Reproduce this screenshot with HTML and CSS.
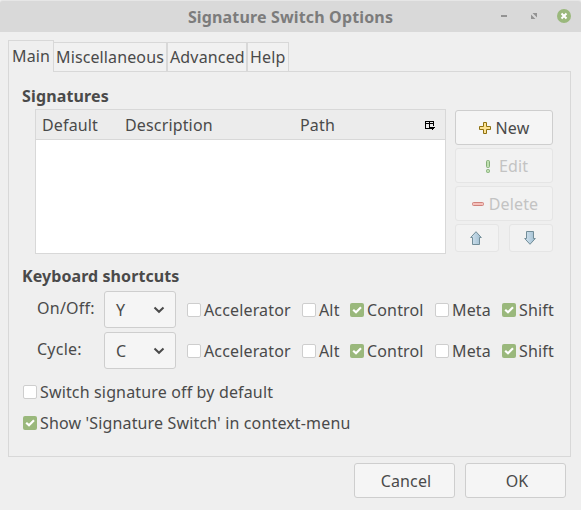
FILE: index.html
```html
<!DOCTYPE html>
<html lang="en">
<head>
<meta charset="utf-8">
<title>Signature Switch Options</title>
<link rel="stylesheet" href="styles.css">
</head>
<body>
<svg class="defs" width="0" height="0">
  <symbol id="tick" viewBox="0 0 14 14"><path d="M3.200 6.700 6 9.300 11 4.300" fill="none" stroke="#fff" stroke-width="2.200"/></symbol>
  <symbol id="chevron" viewBox="0 0 12 8"><path d="M1.500 1.500 6 5.800 10.500 1.500" fill="none" stroke="#4a4a4a" stroke-width="2"/></symbol>
</svg>
<header class="titlebar">
  <h1>Signature Switch Options</h1>
  <div class="controls">
    <svg width="6" height="16" viewBox="0 0 6 16"><path d="M0 7h6v2H0z" fill="#939393"/></svg>
    <svg width="6" height="16" viewBox="0 0 6 16"><path d="M1.500 5H6v4.500zM0 6.500v4.500h4.500z" fill="#939393"/></svg>
    <svg width="14" height="16" viewBox="0 0 14 16"><circle cx="7" cy="8" r="7" fill="#9ab87c"/><path d="M4.500 5.500l5 5m0-5l-5 5" stroke="#fff" stroke-width="2"/></svg>
  </div>
</header>
<nav class="tabs">
  <span class="tab active">Main</span><span class="tab misc">Miscellaneous</span><span class="tab adv">Advanced</span><span class="tab help">Help</span>
</nav>
<main class="panel">
  <h2>Signatures</h2>
  <div class="signatures">
    <div class="tree">
      <div class="tree-head">
        <span>Default</span><span>Description</span><span>Path</span>
        <svg width="11" height="10" viewBox="0 0 11 10" shape-rendering="crispEdges"><path d="M0 0h9v5H8V3H5v4h1v1H0zM1 3v4h3V3zM1 1v1h3V1zM5 1v1h3V1z" fill="#000" fill-rule="evenodd"/><path d="M5 6h5v1H9v1H8v1H7V8H6V7H5z" fill="#000"/></svg>
      </div>
    </div>
    <div class="actions">
      <button class="btn"><svg width="12" height="12" viewBox="0 0 12 12"><path d="M4.500.5h3v4h4v3h-4v4h-3v-4h-4v-3h4z" fill="#fce294" stroke="#8f7212" stroke-linejoin="round"/></svg>New</button>
      <button class="btn off edit"><svg width="4" height="13" viewBox="0 0 4 13"><rect x=".5" y=".5" width="3" height="7" rx="1" fill="#bfe0b0" stroke="#85ae78"/><rect x=".5" y="9.500" width="3" height="3" rx="1" fill="#bfe0b0" stroke="#85ae78"/></svg>Edit</button>
      <button class="btn off delete"><svg width="12" height="4" viewBox="0 0 12 4"><rect x=".5" y=".5" width="11" height="3" rx="1" fill="#f5c0bb" stroke="#cf827c"/></svg>Delete</button>
      <div class="movers">
        <button class="btn off"><svg width="12" height="14" viewBox="0 0 12 14"><defs><linearGradient id="g"><stop stop-color="#d3e4f0"/><stop offset="1" stop-color="#9fbdd0"/></linearGradient></defs><path d="M6 .7 11.300 6.500H9.500v7h-7v-7H.7z" fill="url(#g)" stroke="#728d98"/></svg></button>
        <button class="btn off"><svg width="12" height="14" viewBox="0 0 12 14"><path d="M6 13.300.7 7.500h1.800v-7h7v7h1.800z" fill="url(#g)" stroke="#728d98"/></svg></button>
      </div>
    </div>
  </div>
  <h2 class="keys-title">Keyboard shortcuts</h2>
  <div class="shortcut">
    <span class="name">On/Off:</span>
    <div class="select">Y<svg width="12" height="8"><use href="#chevron"/></svg></div>
    <label class="check accel"><i class="box"></i>Accelerator</label>
    <label class="check alt"><i class="box"></i>Alt</label>
    <label class="check control"><i class="box on"><svg width="14" height="14"><use href="#tick"/></svg></i>Control</label>
    <label class="check meta"><i class="box"></i>Meta</label>
    <label class="check"><i class="box on"><svg width="14" height="14"><use href="#tick"/></svg></i>Shift</label>
  </div>
  <div class="shortcut">
    <span class="name">Cycle:</span>
    <div class="select">C<svg width="12" height="8"><use href="#chevron"/></svg></div>
    <label class="check accel"><i class="box"></i>Accelerator</label>
    <label class="check alt"><i class="box"></i>Alt</label>
    <label class="check control"><i class="box on"><svg width="14" height="14"><use href="#tick"/></svg></i>Control</label>
    <label class="check meta"><i class="box"></i>Meta</label>
    <label class="check"><i class="box on"><svg width="14" height="14"><use href="#tick"/></svg></i>Shift</label>
  </div>
  <div class="options">
    <label class="check"><i class="box"></i>Switch signature off by default</label>
    <label class="check"><i class="box on"><svg width="14" height="14"><use href="#tick"/></svg></i>Show 'Signature Switch' in context-menu</label>
  </div>
</main>
<footer class="footer">
  <button class="btn">Cancel</button>
  <button class="btn">OK</button>
</footer>
</body>
</html>
```
FILE: styles.css
```css
* { box-sizing: border-box; }
body {
  margin: 0;
  width: 581px;
  height: 510px;
  overflow: hidden;
  background: #efefef;
  color: #4a4a4a;
  font: 16px/22px "Noto Sans", sans-serif;
  letter-spacing: .15px;
  white-space: nowrap;
}
svg { display: block; flex: none; }
.defs { position: absolute; }
h1, h2 { margin: 0; font-size: 16px; line-height: 22px; font-weight: 700; }

.titlebar {
  display: grid;
  grid-template-columns: 1fr;
  align-items: center;
  height: 32px;
  background: #d9d9d9;
  border-top: 1px solid #e6e6e6;
  border-radius: 3px 3px 0 0;
}
.titlebar > * { grid-area: 1 / 1; }
h1 { text-align: center; color: #7c7c7c; }
.controls { display: flex; justify-content: flex-end; gap: 24px; padding: 0 10px 1px 0; }
.controls svg:last-child { margin-left: -4px; }

.tabs { display: flex; align-items: flex-end; height: 39px; padding-left: 8px; }
.tab {
  height: 29px;
  padding: 3px 0 0 2px;
  border: 1px solid #d8d8d8;
  border-bottom: 0;
  background: #f1f1f1;
}
.tab.active { width: 46px; height: 32px; margin-bottom: -1px; padding: 4px 0 0 3px; position: relative; background: #efefef; }
.misc { width: 113px; margin-left: -1px; width: 114px; letter-spacing: .12px; }
.adv { width: 80px; }
.help { width: 42px; }

.panel {
  width: 563px;
  height: 386px;
  margin-left: 8px;
  padding: 13px 0 0 13px;
  border: 1px solid #d8d8d8;
}
.signatures { display: flex; gap: 9px; margin: 2px 0 0 13px; }
.tree { width: 411px; height: 145px; background: #fff; border: 1px solid #d8d8d8; }
.tree-head {
  display: grid;
  grid-template-columns: 83px 175px 125px 11px;
  align-items: center;
  height: 30px;
  padding-left: 6px;
  background: #ececec;
  border-bottom: 1px solid #d8d8d8;
}
.tree-head svg { margin-top: 2px; }
.btn {
  display: flex;
  align-items: center;
  justify-content: center;
  gap: 6px;
  height: 35px;
  padding: 0;
  border: 1px solid #cecece;
  border-radius: 3px;
  background: #f5f5f5;
  color: inherit;
  font: inherit;
  letter-spacing: inherit;
}
.btn.off { color: #c3c3c3; border-color: #e5e5e5; background: #f2f2f2; }
.actions { display: grid; grid-template-rows: 35px 35px 35px 28px; row-gap: 3px; width: 98px; padding-top: 1px; }
.actions > .btn { gap: 5px; }
.actions > .btn svg { margin-top: 1px; }
.actions > .edit { gap: 9px; padding-left: 6px; }
.actions > .delete { padding-left: 2px; }
.movers { display: flex; justify-content: space-between; }
.movers .btn { width: 44px; height: 28px; padding-right: 2px; }

.keys-title { margin-top: 11px; letter-spacing: .08px; }
.shortcut { display: flex; height: 37px; margin: 4px 0 0 15px; }
.name { width: 67px; padding-top: 6px; letter-spacing: .25px; }
.select {
  display: flex;
  align-items: center;
  justify-content: space-between;
  width: 72px;
  height: 37px;
  margin-right: 11px;
  padding: 1px 10px 0 11px;
  border: 1px solid #cecece;
  border-radius: 3px;
  background: #f5f5f5;
}
.select svg { margin-top: -1px; }
.check { display: flex; align-items: center; gap: 3px; }
.shortcut .check { padding-top: 1px; }
.box { flex: none; width: 14px; height: 14px; border: 1px solid #cecece; border-radius: 2px; background: #fff; }
.box.on { border: 0; background: #9ab87c; }
.accel { width: 115px; }
.alt { width: 48px; }
.control { width: 85px; }
.meta { width: 67px; }
.options { display: grid; grid-auto-rows: 22px; row-gap: 9px; margin: 12px 0 0 1px; }

.footer { display: flex; justify-content: flex-end; gap: 10px; padding: 6px 15px 0 0; }
.footer .btn { width: 101px; padding-left: 3px; }
```
